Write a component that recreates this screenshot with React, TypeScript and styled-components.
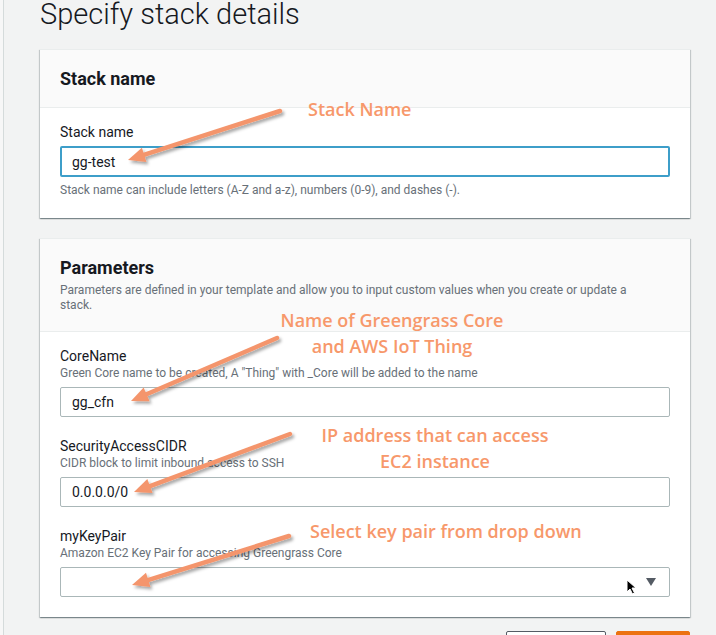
import React from 'react'
import styled, { createGlobalStyle } from 'styled-components'

const GlobalStyle = createGlobalStyle`
  html, body {
    margin: 0;
    padding: 0;
    background: #f7f7f7;
  }
  * {
    box-sizing: border-box;
  }
`

interface Field {
  label: string
  hint?: string
  value?: string
  select?: boolean
}

interface Annotation {
  lines: string[]
  x: number
  y: number
  align: 'left' | 'center'
}

interface Arrow {
  from: [number, number]
  to: [number, number]
}

const Page = styled.div`
  position: relative;
  margin-left: 3px;
  border-left: 1px solid #d5dbdb;
  background: #f2f3f3;
  padding: 0 26px 40px 36px;
  min-height: 700px;
  font-family: Roboto, 'Liberation Sans', sans-serif;
  color: #16191f;
`

const Title = styled.h1`
  margin: 0 0 21px;
  font-size: 29px;
  line-height: 28px;
  font-weight: 300;
  color: #16191f;
`

const Card = styled.section`
  background: #ffffff;
  margin-bottom: 20px;
  box-shadow: 0 1px 1px 0 rgba(0, 28, 36, 0.3), 1px 1px 1px 0 rgba(0, 28, 36, 0.15),
    -1px 1px 1px 0 rgba(0, 28, 36, 0.15);
  border-top: 1px solid #eaeded;
`

const CardHeader = styled.header`
  background: #fafafa;
  padding: 18px 20px 17px;
  border-bottom: 1px solid #eaeded;
`

const CardTitle = styled.h2`
  margin: 0;
  font-size: 18px;
  line-height: 22px;
  font-weight: 700;
  color: #16191f;
`

const CardDescription = styled.p`
  margin: 4px 0 1px;
  max-width: 592px;
  font-size: 12px;
  line-height: 15px;
  color: #687078;
`

const CardBody = styled.div`
  padding: 15px 20px 20px;
  display: flex;
  flex-direction: column;
  gap: 20px;
`

const FieldBox = styled.div`
  display: flex;
  flex-direction: column;
`

const Label = styled.label<{ $gap: number }>`
  font-size: 14px;
  line-height: 18px;
  color: #16191f;
  margin-bottom: ${p => p.$gap}px;
`

const Hint = styled.div<{ $top?: number; $bottom?: number }>`
  font-size: 12px;
  line-height: 16px;
  color: #687078;
  margin-top: ${p => p.$top || 0}px;
  margin-bottom: ${p => p.$bottom || 0}px;
`

const Input = styled.div<{ $focused?: boolean }>`
  position: relative;
  height: ${p => (p.$focused ? 31 : 30)}px;
  display: flex;
  align-items: center;
  padding: 0 ${p => (p.$focused ? 10 : 11)}px;
  border: ${p => (p.$focused ? '2px solid #3d9ec9' : '1px solid #aab7b8')};
  border-radius: 2px;
  background: #ffffff;
  font-size: 14px;
  color: #16191f;
`

const Caret = styled.svg`
  position: absolute;
  right: 13px;
  top: 10px;
`

const Cursor = styled.svg`
  position: absolute;
  right: 32px;
  top: 11px;
`

const Actions = styled.div`
  display: flex;
  justify-content: flex-end;
  gap: 10px;
  margin-top: -6px;
`

const Button = styled.button<{ $primary?: boolean }>`
  height: 32px;
  padding: 0 20px;
  border-radius: 2px;
  font-family: Roboto, 'Liberation Sans', sans-serif;
  font-size: 14px;
  font-weight: 700;
  border: 1px solid ${p => (p.$primary ? '#ec7211' : '#545b64')};
  background: ${p => (p.$primary ? '#ec7211' : '#ffffff')};
  color: ${p => (p.$primary ? '#ffffff' : '#545b64')};
  width: ${p => (p.$primary ? 74 : 100)}px;
`

const Overlay = styled.svg`
  position: absolute;
  left: -4px;
  top: 0;
  pointer-events: none;
  overflow: visible;
`

const Note = styled.div<{ $x: number; $y: number; $align: 'left' | 'center' }>`
  position: absolute;
  left: ${p => (p.$align === 'center' ? p.$x - 200 : p.$x) - 4}px;
  top: ${p => p.$y}px;
  width: ${p => (p.$align === 'center' ? '400px' : 'auto')};
  text-align: ${p => p.$align};
  white-space: nowrap;
  font-family: 'Open Sans', 'Liberation Sans', sans-serif;
  font-weight: 600;
  font-size: 18px;
  line-height: 26px;
  color: #f7986b;
  pointer-events: none;
`

const params: Field[] = [
  {
    label: 'CoreName',
    hint: 'Green Core name to be created, A "Thing" with _Core will be added to the name',
    value: 'gg_cfn'
  },
  {
    label: 'SecurityAccessCIDR',
    hint: 'CIDR block to limit inbound access to SSH',
    value: '0.0.0.0/0'
  },
  {
    label: 'myKeyPair',
    hint: 'Amazon EC2 Key Pair for accessing Greengrass Core',
    select: true
  }
]

const notes: Annotation[] = [
  { lines: ['Stack Name'], x: 308, y: 96, align: 'left' },
  { lines: ['Name of Greengrass Core', 'and AWS IoT Thing'], x: 392, y: 307, align: 'center' },
  { lines: ['IP address that can access', 'EC2 instance'], x: 435, y: 422, align: 'center' },
  { lines: ['Select key pair from drop down'], x: 310, y: 518, align: 'left' }
]

const arrows: Arrow[] = [
  { from: [280, 111], to: [128, 160] },
  { from: [277, 338], to: [131, 401] },
  { from: [290, 434], to: [134, 492] },
  { from: [289, 536], to: [132, 585] }
]

function ArrowShape({ from, to }: Arrow) {
  const dx = to[0] - from[0]
  const dy = to[1] - from[1]
  const len = Math.hypot(dx, dy)
  const ux = dx / len
  const uy = dy / len
  const headLen = 17
  const half = 7.5
  const bx = to[0] - ux * headLen
  const by = to[1] - uy * headLen
  const pts = [
    `${to[0]},${to[1]}`,
    `${bx - uy * half},${by + ux * half}`,
    `${bx + uy * half},${by - ux * half}`
  ].join(' ')
  return (
    <g>
      <line
        x1={from[0]}
        y1={from[1]}
        x2={bx + ux * 2}
        y2={by + uy * 2}
        stroke="#f4956c"
        strokeWidth={4.5}
        strokeLinecap="round"
      />
      <polygon points={pts} fill="#f4956c" />
    </g>
  )
}

function FieldRow({ field }: { field: Field }) {
  return (
    <FieldBox>
      <Label $gap={0}>{field.label}</Label>
      {field.hint && <Hint $bottom={6}>{field.hint}</Hint>}
      <Input>
        {field.value}
        {field.select && (
          <>
            <Cursor width="11" height="16" viewBox="0 0 11 16">
              <path d="M1 1 L1 13 L4 10 L6.5 15 L8.5 14 L6 9 L10 9 Z" fill="#000" stroke="#fff" strokeWidth="1" />
            </Cursor>
            <Caret width="10" height="8" viewBox="0 0 10 8">
              <path d="M0 0 L10 0 L5 8 Z" fill="#545b64" />
            </Caret>
          </>
        )}
      </Input>
    </FieldBox>
  )
}

export default function App() {
  return (
    <>
      <GlobalStyle />
      <Page>
        <Title>Specify stack details</Title>

        <Card>
          <CardHeader>
            <CardTitle>Stack name</CardTitle>
          </CardHeader>
          <CardBody>
            <FieldBox>
              <Label $gap={5}>Stack name</Label>
              <Input $focused>gg-test</Input>
              <Hint $top={5}>
                Stack name can include letters (A-Z and a-z), numbers (0-9), and dashes (-).
              </Hint>
            </FieldBox>
          </CardBody>
        </Card>

        <Card>
          <CardHeader>
            <CardTitle>Parameters</CardTitle>
            <CardDescription>
              Parameters are defined in your template and allow you to input custom values when you create or update a stack.
            </CardDescription>
          </CardHeader>
          <CardBody>
            {params.map(f => (
              <FieldRow key={f.label} field={f} />
            ))}
          </CardBody>
        </Card>

        <Actions>
          <Button>Previous</Button>
          <Button $primary>Next</Button>
        </Actions>

        <Overlay width="716" height="635" viewBox="0 0 716 635">
          <defs>
            <filter id="arrowShadow" x="-20%" y="-20%" width="140%" height="140%">
              <feDropShadow dx="2" dy="2.5" stdDeviation="1.5" floodColor="#000" floodOpacity="0.35" />
            </filter>
          </defs>
          <g filter="url(#arrowShadow)">
            {arrows.map((a, i) => (
              <ArrowShape key={i} from={a.from} to={a.to} />
            ))}
          </g>
        </Overlay>

        {notes.map((n, i) => (
          <Note key={i} $x={n.x} $y={n.y} $align={n.align}>
            {n.lines.map(l => (
              <div key={l}>{l}</div>
            ))}
          </Note>
        ))}
      </Page>
    </>
  )
}
